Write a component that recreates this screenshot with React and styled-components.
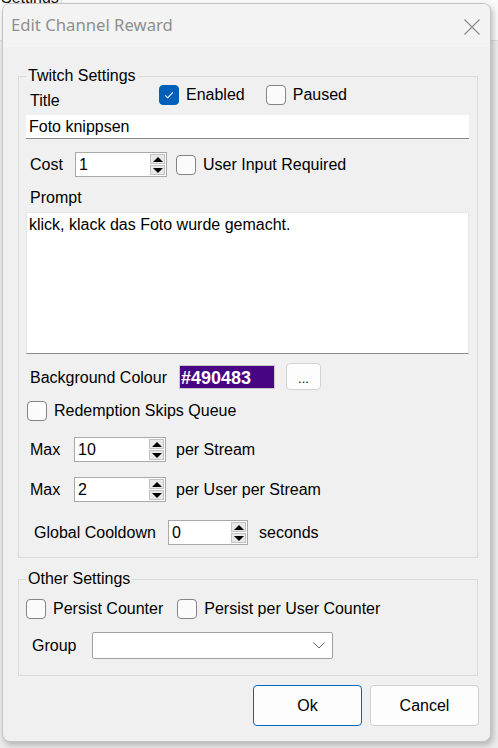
import React from 'react';
import styled, { createGlobalStyle } from 'styled-components';

const GlobalStyle = createGlobalStyle`
  html, body {
    margin: 0;
    padding: 0;
    background: #e9e9e9;
  }
  body {
    width: 498px;
    height: 748px;
    overflow: hidden;
    position: relative;
    font-family: "Liberation Sans", Arial, sans-serif;
    font-size: 16px;
    color: #000;
  }
`;

const Desktop = styled.div`
  position: relative;
  width: 498px;
  height: 748px;
  background: #ececec;
  overflow: hidden;
`;

const BackWindow = styled.div`
  height: 40px;
  background: #fafafa;
  border-bottom: 1px solid #dedede;
  display: flex;
  align-items: flex-start;
`;

const BackTab = styled.div`
  width: 60px;
  height: 100%;
  border-right: 1px solid #d8d8d8;
  margin-top: -11px;
  padding-left: 1px;
  font-size: 16px;
  line-height: 18px;
  color: #111;
`;

const Dialog = styled.div`
  position: absolute;
  left: 2px;
  top: 3px;
  width: 487px;
  height: 737px;
  background: #f0f0f0;
  border: 1px solid #c4c4c4;
  border-radius: 8px;
  box-shadow: 2px 3px 6px rgba(0, 0, 0, 0.25);
  overflow: hidden;
  display: flex;
  flex-direction: column;
`;

const TitleBar = styled.div`
  height: 43px;
  background: #f3f3f3;
  display: flex;
  align-items: center;
  justify-content: space-between;
  padding: 0 10px 0 8px;
  flex-shrink: 0;
`;

const TitleText = styled.span`
  font-family: "Noto Sans", "Open Sans", sans-serif;
  font-size: 16.7px;
  color: #8f8f8f;
  margin-top: -2px;
`;

const CloseButton = styled.span`
  width: 16px;
  height: 16px;
  display: flex;
  margin-top: 2px;
`;

const Body = styled.div`
  padding: 20px 12px 0 15px;
  display: flex;
  flex-direction: column;
`;

const Group = styled.fieldset`
  margin: ${({ $top }) => $top || 0}px 0 0 0;
  padding: 0 8px ${({ $bottom }) => $bottom}px 7px;
  border: 1px solid #dadada;
  border-radius: 0;
  min-width: 0;
  display: flex;
  flex-direction: column;
`;

const Legend = styled.legend`
  padding: 0 2px;
  margin-left: 0;
  line-height: 18px;
  font-size: 16px;
`;

const Row = styled.div`
  display: flex;
  align-items: ${({ $align }) => $align || 'center'};
  margin-top: ${({ $top }) => $top || 0}px;
  height: ${({ $h }) => $h}px;
`;

const Label = styled.span`
  margin-left: ${({ $left }) => $left ?? 4}px;
  width: ${({ $w }) => ($w ? `${$w}px` : 'auto')};
  padding-top: ${({ $pt }) => $pt || 0}px;
  line-height: 18px;
  flex-shrink: 0;
  white-space: nowrap;
`;

const TextLine = styled.div`
  height: 24px;
  box-sizing: border-box;
  background: #fff;
  border-bottom: 1px solid #8a8a8a;
  padding: 3px 0 0 3px;
  line-height: 18px;
`;

const TextArea = styled.div`
  margin-top: 5px;
  height: 142px;
  box-sizing: border-box;
  background: #fff;
  border: 1px solid #e6e6e6;
  border-bottom: 1px solid #8a8a8a;
  padding: 3px 2px;
  line-height: 18px;
`;

const CheckItem = styled.label`
  display: flex;
  align-items: center;
  margin-left: ${({ $left }) => $left || 0}px;
  flex-shrink: 0;
  white-space: nowrap;
`;

const Box = styled.span`
  width: 20px;
  height: 20px;
  box-sizing: border-box;
  border-radius: 4px;
  border: 1px solid ${({ $checked }) => ($checked ? '#005fb8' : '#858585')};
  background: ${({ $checked }) => ($checked ? '#005fb8' : '#fbfbfb')};
  display: flex;
  align-items: center;
  justify-content: center;
  margin-right: 7px;
`;

const CheckLabel = styled.span`
  line-height: 18px;
`;

const Spin = styled.div`
  width: ${({ $w }) => $w}px;
  height: 25px;
  box-sizing: border-box;
  background: #fff;
  border: 1px solid #a9a9a9;
  display: flex;
  flex-shrink: 0;
`;

const SpinValue = styled.span`
  flex: 1;
  padding: 3px 0 0 3px;
  line-height: 18px;
`;

const SpinButtons = styled.div`
  width: 15px;
  display: flex;
  flex-direction: column;
  padding: 1px 1px 1px 0;
  gap: 1px;
`;

const SpinHalf = styled.span`
  flex: 1;
  background: #e8e8e8;
  border: 1px solid #c2c2c2;
  display: flex;
  align-items: center;
  justify-content: center;
`;

const Arrow = styled.span`
  width: 0;
  height: 0;
  border-left: 5px solid transparent;
  border-right: 5px solid transparent;
  ${({ $up }) => ($up ? 'border-bottom: 5px solid #000;' : 'border-top: 5px solid #000;')}
`;

const ColourBox = styled.div`
  width: 96px;
  height: 24px;
  box-sizing: border-box;
  border: 1px solid #c9c9c9;
  background: #490483;
  color: #fff;
  font-weight: bold;
  font-size: 18px;
  line-height: 20px;
  padding: 2px 0 0 1px;
  flex-shrink: 0;
`;

const SmallButton = styled.button`
  margin-left: 11px;
  width: 35px;
  height: 27px;
  box-sizing: border-box;
  background: #fdfdfd;
  border: 1px solid #d3d3d3;
  border-radius: 4px;
  font-family: "Liberation Sans", Arial, sans-serif;
  font-size: 13px;
  padding: 4px 0 0;
  color: #000;
`;

const After = styled.span`
  margin-left: ${({ $left }) => $left}px;
  line-height: 18px;
  white-space: nowrap;
`;

const Combo = styled.div`
  width: 241px;
  height: 27px;
  box-sizing: border-box;
  background: #fff;
  border: 1px solid #a0a0a0;
  border-radius: 2px;
  display: flex;
  align-items: center;
  justify-content: flex-end;
  padding-right: 7px;
`;

const ButtonRow = styled.div`
  display: flex;
  justify-content: flex-end;
  gap: 8px;
  margin-top: 9px;
  margin-right: -1px;
`;

const DialogButton = styled.button`
  width: ${({ $w }) => $w}px;
  height: 41px;
  box-sizing: border-box;
  background: #fdfdfd;
  border: 1px solid ${({ $primary }) => ($primary ? '#0067c0' : '#d0d0d0')};
  border-radius: 4px;
  font-family: "Liberation Sans", Arial, sans-serif;
  font-size: 16px;
  color: #000;
  padding: 0;
`;

const Check = ({ checked, children, left }) => (
  <CheckItem $left={left}>
    <Box $checked={checked}>
      {checked && (
        <svg width="12" height="12" viewBox="0 0 12 12">
          <path d="M2.2 6.3 L4.8 8.8 L9.8 3.4" fill="none" stroke="#fff" strokeWidth="1.1" />
        </svg>
      )}
    </Box>
    <CheckLabel>{children}</CheckLabel>
  </CheckItem>
);

const NumberBox = ({ value, width = 92 }) => (
  <Spin $w={width}>
    <SpinValue>{value}</SpinValue>
    <SpinButtons>
      <SpinHalf>
        <Arrow $up />
      </SpinHalf>
      <SpinHalf>
        <Arrow />
      </SpinHalf>
    </SpinButtons>
  </Spin>
);

export default function App() {
  return (
    <Desktop>
      <GlobalStyle />
      <BackWindow>
        <BackTab>Settings</BackTab>
      </BackWindow>
      <Dialog>
        <TitleBar>
          <TitleText>Edit Channel Reward</TitleText>
          <CloseButton>
            <svg width="16" height="16" viewBox="0 0 16 16">
              <path d="M0.5 0.5 L15.5 15.5 M15.5 0.5 L0.5 15.5" stroke="#8a8a8a" strokeWidth="1.1" />
            </svg>
          </CloseButton>
        </TitleBar>
        <Body>
          <Group $bottom={12}>
            <Legend>Twitch Settings</Legend>
            <Row $align="flex-start" $top={0} $h={30}>
              <Label $w={129} $pt={7}>Title</Label>
              <Check checked>Enabled</Check>
              <Check left={21}>Paused</Check>
            </Row>
            <TextLine>Foto knippsen</TextLine>
            <Row $top={13} $h={25}>
              <Label $w={45}>Cost</Label>
              <NumberBox value="1" />
              <Check left={9}>User Input Required</Check>
            </Row>
            <Row $top={12} $h={18}>
              <Label>Prompt</Label>
            </Row>
            <TextArea>klick, klack das Foto wurde gemacht.</TextArea>
            <Row $top={9} $h={27}>
              <Label $w={149} $pt={2}>Background Colour</Label>
              <ColourBox>#490483</ColourBox>
              <SmallButton>...</SmallButton>
            </Row>
            <Row $top={11} $h={20}>
              <Check left={1}>Redemption Skips Queue</Check>
            </Row>
            <Row $top={16} $h={25}>
              <Label $w={44}>Max</Label>
              <NumberBox value="10" />
              <After $left={10}>per Stream</After>
            </Row>
            <Row $top={15} $h={25}>
              <Label $w={44}>Max</Label>
              <NumberBox value="2" />
              <After $left={10}>per User per Stream</After>
            </Row>
            <Row $top={18} $h={25}>
              <Label $left={8} $w={134}>Global Cooldown</Label>
              <NumberBox value="0" width={80} />
              <After $left={11}>seconds</After>
            </Row>
          </Group>
          <Group $top={12} $bottom={16}>
            <Legend>Other Settings</Legend>
            <Row $top={11} $h={20}>
              <Check>Persist Counter</Check>
              <Check left={14}>Persist per User Counter</Check>
            </Row>
            <Row $top={13} $h={27}>
              <Label $left={6} $w={60}>Group</Label>
              <Combo>
                <svg width="12" height="7" viewBox="0 0 12 7">
                  <path d="M0.5 0.5 L6 6 L11.5 0.5" fill="none" stroke="#666" strokeWidth="1" />
                </svg>
              </Combo>
            </Row>
          </Group>
          <ButtonRow>
            <DialogButton $primary $w={109}>Ok</DialogButton>
            <DialogButton $w={109}>Cancel</DialogButton>
          </ButtonRow>
        </Body>
      </Dialog>
    </Desktop>
  );
}
